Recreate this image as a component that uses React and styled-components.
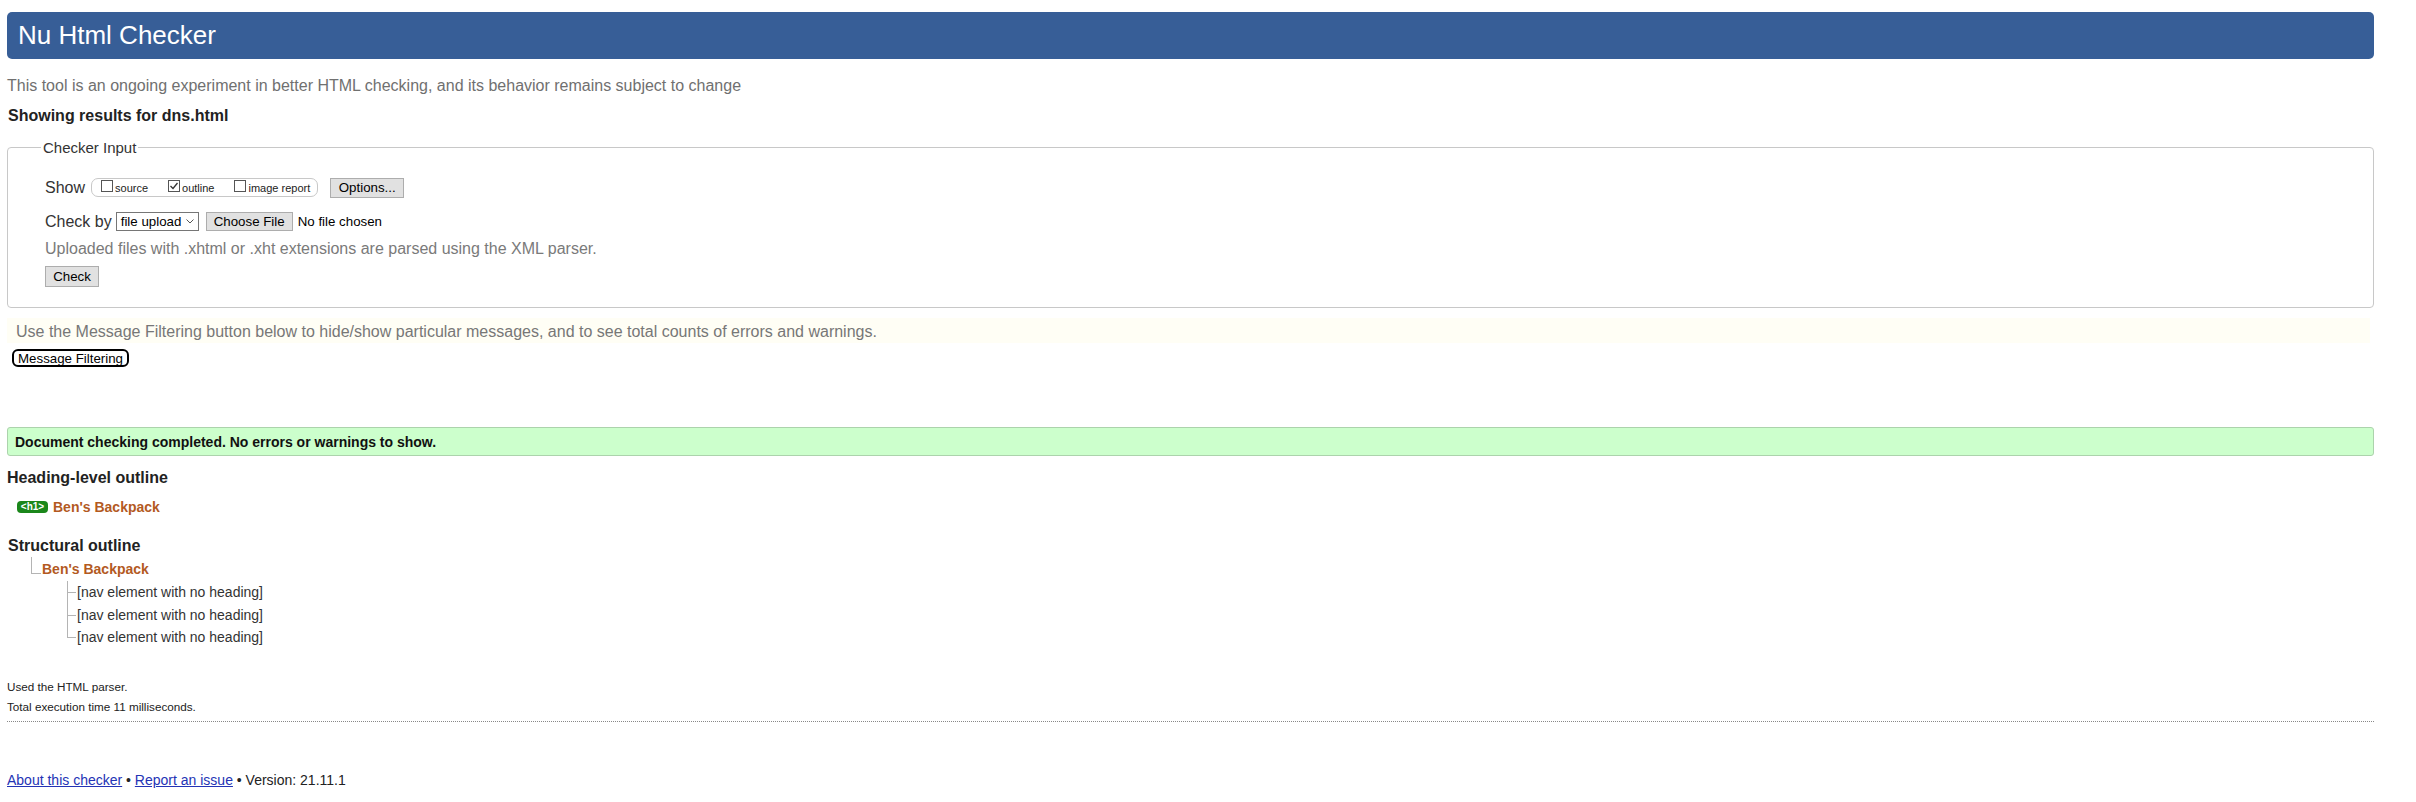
import React from "react";
import styled, { createGlobalStyle } from "styled-components";

const GlobalStyle = createGlobalStyle`
  body {
    margin: 0;
    background: #ffffff;
    font-family: "Liberation Sans", Arial, sans-serif;
    color: #222;
  }
`;

const Page = styled.div`
  padding: 12px 42px 0 7px;
`;

const Banner = styled.h1`
  margin: 0;
  height: 47px;
  line-height: 47px;
  padding-left: 11px;
  background: #375e97;
  border-radius: 5px;
  color: #fff;
  font-size: 26px;
  font-weight: normal;
`;

const Intro = styled.p`
  margin: 17px 0 0;
  font-size: 16px;
  line-height: 20px;
  color: #707070;
`;

const ResultsFor = styled.h2`
  margin: 9.5px 0 0 1px;
  font-size: 16px;
  line-height: 20px;
  color: #222;
`;

const InputBox = styled.fieldset`
  margin: 13.3px 0 0;
  padding: 21px 0 20px 37px;
  border: 1px solid #c8c8c8;
  border-radius: 4px;
  min-width: 0;
`;

const Legend = styled.legend`
  margin-left: -4px;
  padding: 0 2px;
  font-size: 15px;
  line-height: 18px;
  color: #333;
`;

const Row = styled.div`
  display: flex;
  align-items: center;
  height: 20px;
  margin-top: ${(p) => p.$top || 0}px;
  font-size: 16px;
  color: ${(p) => (p.$muted ? "#7a7a7a" : "#333")};
`;

const CheckGroup = styled.div`
  display: inline-flex;
  align-items: center;
  gap: 20px;
  height: 19px;
  box-sizing: border-box;
  margin-left: 6px;
  padding: 0 7px 0 9px;
  border: 1px solid #c8c8c8;
  border-radius: 7px;
`;

const CheckItem = styled.label`
  display: inline-flex;
  align-items: center;
  font-size: 11px;
  color: #222;
`;

const Box = styled.span`
  display: inline-flex;
  align-items: center;
  justify-content: center;
  width: 12px;
  height: 12px;
  box-sizing: border-box;
  margin: -3px 2px 0 0;
  border: 1px solid #555;
  background: #fff;
`;

const GrayButton = styled.button`
  width: ${(p) => p.$w}px;
  height: ${(p) => p.$h}px;
  margin-left: ${(p) => p.$gap || 0}px;
  padding: 0;
  border: 1px solid #adadad;
  border-radius: 0;
  background: #e1e1e1;
  color: #000;
  font-family: "Liberation Sans", Arial, sans-serif;
  font-size: 13.3px;
`;

const Select = styled.div`
  display: inline-flex;
  align-items: center;
  justify-content: space-between;
  width: 83px;
  height: 19px;
  box-sizing: border-box;
  margin-left: 4px;
  padding: 0 4px;
  border: 1px solid #767676;
  background: #fff;
  font-size: 13.3px;
  color: #000;
`;

const FileName = styled.span`
  margin-left: 5px;
  font-size: 13.3px;
  color: #000;
`;

const FilterNote = styled.div`
  margin: 10.5px 4px 0 0;
  padding: 3.5px 0 1.5px 9px;
  background: #fffef5;
  font-size: 16px;
  line-height: 20px;
  color: #777;
`;

const FilterButton = styled.button`
  display: block;
  width: 117px;
  height: 18px;
  margin: 6px 0 0 5px;
  padding: 0;
  border: 2px solid #000;
  border-radius: 6px;
  background: #fff;
  color: #000;
  font-family: "Liberation Sans", Arial, sans-serif;
  font-size: 13.3px;
`;

const Success = styled.div`
  margin-top: 60px;
  padding: 5px 0 4px 7px;
  border: 1px solid #acd3ac;
  border-radius: 3px;
  background: #ccffcc;
  font-size: 14px;
  font-weight: bold;
  line-height: 18px;
  color: #111;
`;

const SectionTitle = styled.h2`
  margin: ${(p) => p.$top}px 0 0 ${(p) => p.$indent || 0}px;
  font-size: 16px;
  line-height: 20px;
  color: #222;
`;

const HeadingRow = styled.div`
  display: flex;
  align-items: center;
  height: 20px;
  margin-top: 9px;
  padding-left: 10px;
`;

const Badge = styled.span`
  display: inline-flex;
  align-items: center;
  justify-content: center;
  width: 31px;
  height: 12px;
  border-radius: 4px;
  background: #1b871b;
  color: #fff;
  font-size: 10px;
  font-weight: bold;
`;

const HeadingText = styled.span`
  margin-left: 5px;
  font-size: 14px;
  font-weight: bold;
  color: #b35a1f;
`;

const Tree = styled.ul`
  list-style: none;
  margin: ${(p) => p.$top || 0}px 0 0;
  padding-left: 35px;
`;

const TreeItem = styled.li`
  position: relative;
  font-size: 14px;
  line-height: 22.7px;
  font-weight: ${(p) => (p.$strong ? "bold" : "normal")};
  color: ${(p) => (p.$strong ? "#b35a1f" : "#333")};

  &::before {
    content: "";
    position: absolute;
    left: -${(p) => p.$arm + 2}px;
    top: ${(p) => p.$from || 0}px;
    width: ${(p) => p.$arm}px;
    height: ${(p) => p.$tick - (p.$from || 0)}px;
    border-left: 1px solid #b4b4b4;
    border-bottom: 1px solid #b4b4b4;
  }

  &::after {
    content: "";
    display: ${(p) => (p.$last ? "none" : "block")};
    position: absolute;
    left: -${(p) => p.$arm + 2}px;
    top: ${(p) => p.$tick}px;
    bottom: 0;
    border-left: 1px solid #b4b4b4;
  }
`;

const Meta = styled.div`
  margin-top: 27.5px;
  font-size: 11.7px;
  line-height: 20px;
  color: #222;
`;

const Rule = styled.hr`
  margin: 4px 0 0;
  height: 0;
  border: 0;
  border-top: 1px dotted #888;
`;

const Footer = styled.div`
  margin-top: 48.5px;
  font-size: 14px;
  line-height: 20px;
  color: #222;
`;

const FooterLink = styled.a`
  color: #2433b5;
  text-decoration: underline;
`;

const Chevron = () => (
  <svg width="8" height="5" viewBox="0 0 8 5">
    <polyline points="0.5,0.5 4,4 7.5,0.5" fill="none" stroke="#555" strokeWidth="1" />
  </svg>
);

const Tick = () => (
  <svg width="10" height="10" viewBox="0 0 10 10">
    <polyline points="1.5,5 4,7.5 8.5,2" fill="none" stroke="#333" strokeWidth="1.3" />
  </svg>
);

const showOptions = [
  { label: "source", checked: false },
  { label: "outline", checked: true },
  { label: "image report", checked: false },
];

const navItems = ["a", "b", "c"];

export default function App() {
  return (
    <Page>
      <GlobalStyle />
      <Banner>Nu Html Checker</Banner>
      <Intro>
        This tool is an ongoing experiment in better HTML checking, and its behavior remains subject to change
      </Intro>
      <ResultsFor>Showing results for dns.html</ResultsFor>

      <InputBox>
        <Legend>Checker Input</Legend>
        <Row>
          Show
          <CheckGroup>
            {showOptions.map((o) => (
              <CheckItem key={o.label}>
                <Box>{o.checked && <Tick />}</Box>
                {o.label}
              </CheckItem>
            ))}
          </CheckGroup>
          <GrayButton $w={74} $h={20} $gap={12}>Options...</GrayButton>
        </Row>
        <Row $top={14}>
          Check by
          <Select>
            file upload
            <Chevron />
          </Select>
          <GrayButton $w={87} $h={19} $gap={7}>Choose File</GrayButton>
          <FileName>No file chosen</FileName>
        </Row>
        <Row $top={7} $muted>
          Uploaded files with .xhtml or .xht extensions are parsed using the XML parser.
        </Row>
        <Row $top={8}>
          <GrayButton $w={54} $h={21}>Check</GrayButton>
        </Row>
      </InputBox>

      <FilterNote>
        Use the Message Filtering button below to hide/show particular messages, and to see total counts of errors and warnings.
      </FilterNote>
      <FilterButton>Message Filtering</FilterButton>

      <Success>Document checking completed. No errors or warnings to show.</Success>

      <SectionTitle $top={11.5}>Heading-level outline</SectionTitle>
      <HeadingRow>
        <Badge>&lt;h1&gt;</Badge>
        <HeadingText>Ben's Backpack</HeadingText>
      </HeadingRow>

      <SectionTitle $top={19} $indent={1}>Structural outline</SectionTitle>
      <Tree $top={2.5}>
        <TreeItem $strong $last $arm={9} $from={-1} $tick={15}>
          Ben's Backpack
          <Tree>
            {navItems.map((k, i) => (
              <TreeItem key={k} $arm={8} $tick={11} $last={i === navItems.length - 1}>
                [nav element with no heading]
              </TreeItem>
            ))}
          </Tree>
        </TreeItem>
      </Tree>

      <Meta>
        Used the HTML parser.
        <br />
        Total execution time 11 milliseconds.
      </Meta>
      <Rule />

      <Footer>
        <FooterLink href="#about">About this checker</FooterLink> • <FooterLink href="#issue">Report an issue</FooterLink> • Version: 21.11.1
      </Footer>
    </Page>
  );
}
